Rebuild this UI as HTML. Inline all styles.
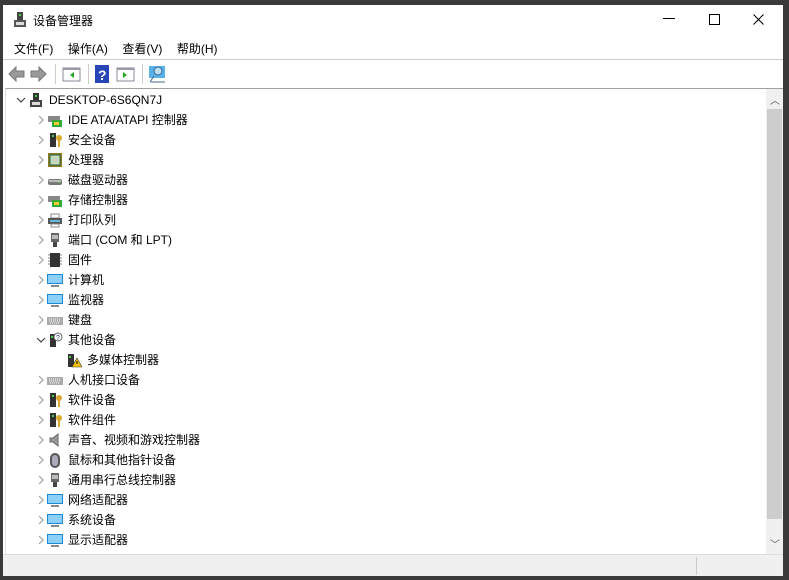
<!DOCTYPE html>
<html><head><meta charset="utf-8"><style>
*{margin:0;padding:0;box-sizing:border-box}
body{width:789px;height:580px;background:#3a3a3a;overflow:hidden;font-family:"Liberation Sans","Noto Sans CJK SC",sans-serif;font-size:12px;color:#000;position:relative}
.win{position:absolute;left:3px;top:5px;width:780px;height:571px;background:#fff}
.title{position:absolute;left:10px;top:7px;font-size:12px}
.menu{position:absolute;top:35px;left:11px;font-size:12px}
.menu span{margin-right:14.5px}
.sep1{position:absolute;left:0;top:54px;width:780px;height:1px;background:#ccc}
.tb{position:absolute;top:55px;left:0;width:780px;height:28px;background:#fff}
.panel{position:absolute;left:2px;top:83px;width:778px;height:466px;border-top:1px solid #a0a0a0;border-left:1px solid #e0e0e0;background:#fff}
.sb{position:absolute;right:0;top:0;width:17px;height:465px;background:#f0f0f0}
.thumb{position:absolute;left:1px;top:20px;width:15px;height:410px;background:#cdcdcd}
.row{position:absolute;height:20px;line-height:20px;white-space:nowrap}
.ic{position:absolute;width:16px;height:16px}
.status{position:absolute;left:0;top:549px;width:780px;height:22px;background:#f0f0f0;border-top:1px solid #ddd}
</style></head><body>
<div class="win">
<svg style="position:absolute;left:10px;top:7px" width="14" height="16"><rect x="4" y="0" width="6" height="8" fill="#444"/><rect x="6" y="2" width="2" height="2" fill="#4c4"/><rect x="1" y="8" width="12" height="7" fill="#555"/><rect x="3" y="10" width="8" height="3" fill="#ddd"/></svg>
<div class="title" style="left:30px">设备管理器</div>
<svg style="position:absolute;left:660px;top:13px" width="12" height="2"><rect width="12" height="1" fill="#000"/></svg>
<svg style="position:absolute;left:706px;top:9px" width="12" height="12"><rect x="0.5" y="0.5" width="10" height="10" fill="none" stroke="#000"/></svg>
<svg style="position:absolute;left:750px;top:9px" width="12" height="12"><path d="M0.5 0.5L10.5 10.5M10.5 0.5L0.5 10.5" stroke="#000"/></svg>
<div class="menu"><span>文件(F)</span><span>操作(A)</span><span>查看(V)</span><span>帮助(H)</span></div>
<div class="sep1"></div>
<div class="tb">
<svg width="180" height="28"><path d="M6 14l7-7v4h8v6h-8v4z" fill="#999" stroke="#777"/><path d="M43 14l-7-7v4h-8v6h8v4z" fill="#999" stroke="#777"/>
<rect x="52" y="4" width="1" height="20" fill="#ccc"/>
<rect x="60" y="8" width="17" height="13" fill="#fff" stroke="#889"/><rect x="60" y="8" width="17" height="2" fill="#99a"/><path d="M71 12v6l-4-3z" fill="#2a2"/>
<rect x="85" y="4" width="1" height="20" fill="#ccc"/>
<rect x="92" y="5" width="14" height="18" fill="#2845b8"/><text x="95" y="20" fill="#fff" font-size="14" font-weight="bold">?</text>
<rect x="114" y="8" width="17" height="13" fill="#fff" stroke="#889"/><rect x="114" y="8" width="17" height="2" fill="#99a"/><path d="M120 12v6l4-3z" fill="#2a2"/>
<rect x="139" y="4" width="1" height="20" fill="#ccc"/>
<rect x="146" y="6" width="16" height="12" fill="#5ab0e8"/><circle cx="155" cy="11" r="4" fill="#bde" stroke="#369"/><path d="M151 16l-4 6M148 22h14" stroke="#468"/></svg>
</div>
<div class="panel">
<div class="sb"><div style="position:absolute;top:3px;left:4px;color:#555;font-size:10px">︿</div><div class="thumb"></div><div style="position:absolute;bottom:3px;left:4px;color:#555;font-size:10px">﹀</div></div>
</div>
<div class="status"><div style="position:absolute;left:693px;top:2px;width:1px;height:18px;background:#ccc"></div></div>
</div>
<div id="tree"></div>
<script>
var rows=[
[0,'DESKTOP-6S6QN7J','v','pc'],
[1,'IDE ATA/ATAPI 控制器','>','ide'],[1,'安全设备','>','sec'],[1,'处理器','>','cpu'],[1,'磁盘驱动器','>','disk'],[1,'存储控制器','>','ide'],[1,'打印队列','>','prn'],[1,'端口 (COM 和 LPT)','>','port'],[1,'固件','>','chip'],[1,'计算机','>','mon'],[1,'监视器','>','mon'],[1,'键盘','>','kb'],[1,'其他设备','v','oth'],[2,'多媒体控制器','','warn'],[1,'人机接口设备','>','kb'],[1,'软件设备','>','sec'],[1,'软件组件','>','sec'],[1,'声音、视频和游戏控制器','>','spk'],[1,'鼠标和其他指针设备','>','mouse'],[1,'通用串行总线控制器','>','port'],[1,'网络适配器','>','mon'],[1,'系统设备','>','mon'],[1,'显示适配器','>','mon']];
var ic={pc:'<rect x="5" y="1" width="6" height="7" fill="#333"/><rect x="7" y="3" width="2" height="2" fill="#4c4"/><rect x="2" y="8" width="12" height="7" fill="#444"/><rect x="4" y="10" width="8" height="3" fill="#ddd"/>',
ide:'<rect x="1" y="4" width="12" height="6" fill="#888"/><rect x="5" y="8" width="10" height="7" fill="#3a3"/><rect x="7" y="10" width="5" height="3" fill="#fc3"/>',
sec:'<rect x="3" y="1" width="6" height="14" fill="#333"/><rect x="5" y="3" width="2" height="2" fill="#4c4"/><circle cx="12" cy="6" r="3" fill="#d9a830"/><rect x="11" y="8" width="2" height="7" fill="#d9a830"/>',
cpu:'<rect x="1" y="1" width="14" height="14" fill="#8a7a20"/><rect x="3" y="3" width="10" height="10" fill="#c8d8c0" stroke="#264"/>',
disk:'<rect x="1" y="7" width="14" height="6" rx="2" fill="#777"/><rect x="2" y="8" width="12" height="2" fill="#bbb"/><rect x="11" y="10" width="2" height="1" fill="#4c4"/>',
prn:'<rect x="4" y="2" width="8" height="4" fill="#fff" stroke="#888"/><rect x="1" y="6" width="14" height="6" fill="#555"/><rect x="3" y="8" width="10" height="2" fill="#6bd"/><rect x="4" y="12" width="8" height="3" fill="#fff" stroke="#888"/>',
port:'<rect x="4" y="1" width="8" height="9" fill="#666"/><rect x="5" y="3" width="6" height="4" fill="#bbb"/><rect x="6" y="10" width="4" height="5" fill="#444"/>',
chip:'<rect x="3" y="1" width="10" height="14" fill="#333"/><path d="M1 3h2M1 6h2M1 9h2M1 12h2M13 3h2M13 6h2M13 9h2M13 12h2" stroke="#888"/>',
mon:'<rect x="0" y="2" width="16" height="10" fill="#1e88d8"/><rect x="1" y="3" width="14" height="8" fill="#8cd0f8"/><rect x="4" y="13" width="8" height="2" fill="#888"/>',
kb:'<rect x="0" y="5" width="16" height="8" fill="#aaa"/><path d="M2 7h12M2 9h12M3 11h10" stroke="#fff" stroke-dasharray="1 1"/>',
oth:'<rect x="3" y="2" width="6" height="13" fill="#333"/><rect x="4" y="4" width="2" height="2" fill="#4c4"/><circle cx="11" cy="5" r="4" fill="#fff" stroke="#666"/><text x="9" y="8" font-size="7" fill="#249">?</text>',
warn:'<rect x="2" y="2" width="6" height="13" fill="#333"/><rect x="3" y="4" width="2" height="2" fill="#4c4"/><path d="M11 6l5 9h-10z" fill="#f5c400" stroke="#333" stroke-width=".6"/><rect x="10.5" y="9" width="1" height="3" fill="#000"/>',
spk:'<path d="M3 6h3l5-4v12l-5-4h-3z" fill="#999" stroke="#666"/>',
mouse:'<rect x="3" y="1" width="10" height="15" rx="5" fill="#555"/><rect x="5" y="3" width="6" height="11" rx="3" fill="#aab"/>'};
var h='';rows.forEach(function(r,i){var y=90+20*i,lv=r[0];var ax=[15,35,0][lv],ix=[28,47,66][lv],tx=[49,68,87][lv];
if(r[2]=='>')h+='<svg class="ic" style="left:'+(ax-2)+'px;top:'+(y+2)+'px" width="16" height="16"><path d="M6 4l4 4-4 4" fill="none" stroke="#a0a0a0" stroke-width="1.2"/></svg>';
if(r[2]=='v')h+='<svg class="ic" style="left:'+(ax-2)+'px;top:'+(y+2)+'px" width="16" height="16"><path d="M4 6l4 4 4-4" fill="none" stroke="#444" stroke-width="1.2"/></svg>';
h+='<svg class="ic" style="left:'+ix+'px;top:'+(y+2)+'px" width="16" height="16">'+ic[r[3]]+'</svg>';
h+='<div class="row" style="left:'+tx+'px;top:'+y+'px">'+r[1]+'</div>';});
document.getElementById('tree').innerHTML=h;
</script>
</body></html>
